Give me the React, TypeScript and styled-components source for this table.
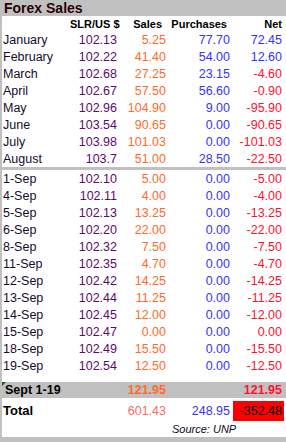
import styled, { createGlobalStyle } from 'styled-components';

const GlobalStyle = createGlobalStyle`
body {
  margin: 0;
  background: #ffffff;
  font-family: 'Liberation Sans', Arial, sans-serif;
}
`

const GRAY = '#c0c0c0';

const tones: Record<string, string> = {
    label: '#160a2e',
    rate: '#5c0a6c',
    sales: '#ff6a28',
    buy: '#3434ff',
    pos: '#3434ff',
    neg: '#ff1030',
    total: '#ff6a66',
    dark: '#000000',
};

const Frame = styled.div`
display: flex;
flex-direction: column;
width: 286px;
height: 442px;
box-sizing: border-box;
border-left: 2px solid ${GRAY};
background: #ffffff;
overflow: hidden;
`

const TitleBar = styled.div`
height: 16px;
margin-left: -2px;
padding-left: 4px;
background: ${GRAY};
color: #2a0404;
font-size: 14px;
font-weight: 700;
line-height: 17px;
`

const Grid = styled.div<{ $height: number }>`
display: grid;
grid-template-columns: 67px 47px 49px 64px 52px;
align-items: center;
height: ${p => p.$height}px;
padding-left: 1px;
`

const HeadCell = styled.div`
font-size: 11px;
font-weight: 700;
color: #000000;
text-align: right;
white-space: nowrap;
`

const Cell = styled.div<{ $tone: string; $bold?: boolean; $left?: boolean; $size?: number }>`
font-size: ${p => p.$size ?? 12.5}px;
font-weight: ${p => (p.$bold ? 700 : 400)};
color: ${p => tones[p.$tone]};
text-align: ${p => (p.$left ? 'left' : 'right')};
white-space: nowrap;
`

const Separator = styled.div`
height: 3px;
background: ${GRAY};
`

const Spacer = styled.div<{ $h: number }>`
height: ${p => p.$h}px;
`

const SummaryBand = styled.div`
position: relative;
margin-left: -2px;
padding-left: 2px;
background: ${GRAY};
`

const CommentMark = styled.span`
position: absolute;
left: 1px;
top: 0;
width: 0;
height: 0;
border-top: 5px solid #0a6a0a;
border-right: 5px solid transparent;
`

const AlertCell = styled.div`
margin-left: 3px;
margin-right: -2px;
padding: 0 2px 0 0;
height: 20px;
line-height: 21px;
background: #ff0000;
color: #000000;
font-size: 12.5px;
text-align: right;
`

const SourceNote = styled.div`
height: 14px;
padding-left: 170px;
font-size: 11px;
font-style: italic;
line-height: 13px;
color: #0a0a28;
`

const BottomBar = styled.div`
margin-top: auto;
margin-left: -2px;
height: 5px;
background: ${GRAY};
`

type Row = [string, string, string, string, string];

const months: Row[] = [
    ['January', '102.13', '5.25', '77.70', '72.45'],
    ['February', '102.22', '41.40', '54.00', '12.60'],
    ['March', '102.68', '27.25', '23.15', '-4.60'],
    ['April', '102.67', '57.50', '56.60', '-0.90'],
    ['May', '102.96', '104.90', '9.00', '-95.90'],
    ['June', '103.54', '90.65', '0.00', '-90.65'],
    ['July', '103.98', '101.03', '0.00', '-101.03'],
    ['August', '103.7', '51.00', '28.50', '-22.50'],
];

const days: Row[] = [
    ['1-Sep', '102.10', '5.00', '0.00', '-5.00'],
    ['4-Sep', '102.11', '4.00', '0.00', '-4.00'],
    ['5-Sep', '102.13', '13.25', '0.00', '-13.25'],
    ['6-Sep', '102.20', '22.00', '0.00', '-22.00'],
    ['8-Sep', '102.32', '7.50', '0.00', '-7.50'],
    ['11-Sep', '102.35', '4.70', '0.00', '-4.70'],
    ['12-Sep', '102.42', '14.25', '0.00', '-14.25'],
    ['13-Sep', '102.44', '11.25', '0.00', '-11.25'],
    ['14-Sep', '102.45', '12.00', '0.00', '-12.00'],
    ['15-Sep', '102.47', '0.00', '0.00', '0.00'],
    ['18-Sep', '102.49', '15.50', '0.00', '-15.50'],
    ['19-Sep', '102.54', '12.50', '0.00', '-12.50'],
];

const DataRow = ({ row }: { row: Row }) => (
    <Grid $height={17}>
        <Cell $tone="label" $left>{row[0]}</Cell>
        <Cell $tone="rate">{row[1]}</Cell>
        <Cell $tone="sales">{row[2]}</Cell>
        <Cell $tone="buy">{row[3]}</Cell>
        <Cell $tone={row[4].startsWith('-') ? 'neg' : row[4] === '0.00' ? 'neg' : 'pos'}>{row[4]}</Cell>
    </Grid>
)

const App = () => {
    return (
        <>
            <GlobalStyle />
            <Frame>
                <TitleBar>Forex Sales</TitleBar>
                <Grid $height={15}>
                    <span />
                    <HeadCell>SLR/US $</HeadCell>
                    <HeadCell style={{ paddingRight: 4 }}>Sales</HeadCell>
                    <HeadCell style={{ paddingRight: 3 }}>Purchases</HeadCell>
                    <HeadCell>Net</HeadCell>
                </Grid>
                {months.map(r => <DataRow key={r[0]} row={r} />)}
                <Separator />
                {days.map(r => <DataRow key={r[0]} row={r} />)}
                <Spacer $h={8} />
                <SummaryBand>
                    <CommentMark />
                    <Grid $height={16}>
                        <Cell $tone="dark" $bold $left style={{ paddingLeft: 2 }}>Sept 1-19</Cell>
                        <span />
                        <Cell $tone="sales" $bold>121.95</Cell>
                        <span />
                        <Cell $tone="neg" $bold>121.95</Cell>
                    </Grid>
                </SummaryBand>
                <Grid $height={25}>
                    <Cell $tone="dark" $bold $left $size={13}>Total</Cell>
                    <span />
                    <Cell $tone="total">601.43</Cell>
                    <Cell $tone="buy">248.95</Cell>
                    <AlertCell>-352.48</AlertCell>
                </Grid>
                <SourceNote>Source: UNP</SourceNote>
                <BottomBar />
            </Frame>
        </>
    )
}

export default App
